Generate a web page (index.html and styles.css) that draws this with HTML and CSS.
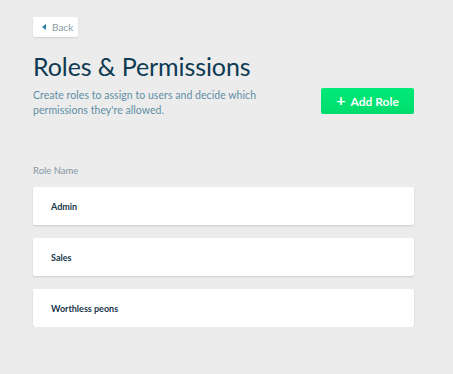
FILE: index.html
```html
<!DOCTYPE html>
<html lang="en">
<head>
  <meta charset="UTF-8"/>
  <meta name="viewport" content="width=device-width, initial-scale=1.0"/>
  <title>Roles &amp; Permissions</title>
  <link rel="stylesheet" href="styles.css">
</head>
<body>
  <div class="page">
    <button class="back-btn">
      <svg class="caret" width="4" height="6" viewBox="0 0 4 6"><path d="M4 0 L0 3 L4 6 Z" fill="#2f7ea3"/></svg>
      Back
    </button>

    <div class="header">
      <div class="intro">
        <h1>Roles &amp; Permissions</h1>
        <p>Create roles to assign to users and decide which permissions they're allowed.</p>
      </div>
      <button class="add-btn"><span class="plus">+</span> Add Role</button>
    </div>

    <div class="label">Role Name</div>
    <div class="roles">
      <div class="role-card">Admin</div>
      <div class="role-card">Sales</div>
      <div class="role-card">Worthless peons</div>
    </div>
  </div>
</body>
</html>
```

FILE: styles.css
```css
:root {
  --bg-color: #ececec;
  --card-bg: #ffffff;
  --title-color: #0e3a52;
  --sub-color: #5f8ea6;
  --label-color: #8497a3;
  --role-color: #17364a;
  --card-shadow: 0 1px 2px rgba(0,0,0,0.12);
}

*, *::before, *::after { box-sizing: border-box; }

body {
  margin: 0;
  font-family: Lato, "Open Sans", sans-serif;
  background: var(--bg-color);
}

.page {
  width: 381px;
  margin-left: 33px;
  padding-top: 17px;
}

.back-btn {
  display: flex;
  align-items: center;
  gap: 6px;
  width: 45px;
  height: 20px;
  padding: 0 0 0 9px;
  border: none;
  border-radius: 2px;
  background: var(--card-bg);
  box-shadow: var(--card-shadow);
  font: 400 10px Lato, sans-serif;
  color: #8a9aa6;
}

.header {
  display: flex;
  justify-content: space-between;
  align-items: flex-start;
  margin-top: 12px;
}

h1 {
  margin: 0;
  font-weight: 400;
  font-size: 25px;
  line-height: 34px;
  letter-spacing: -0.1px;
  color: var(--title-color);
}

.intro p {
  margin: 5px 0 0;
  width: 228px;
  font-size: 10.5px;
  line-height: 15px;
  letter-spacing: 0.05px;
  color: var(--sub-color);
}

.add-btn {
  margin-top: 39px;
  width: 93px;
  height: 26px;
  border: none;
  border-radius: 2px;
  background: linear-gradient(180deg, #00ea78 0%, #00dc6c 100%);
  color: #fff;
  font: 700 12px Lato, sans-serif;
  display: flex;
  align-items: center;
  justify-content: center;
  gap: 5px;
}

.plus {
  font-size: 16px;
  font-weight: 700;
  line-height: 1;
  margin-top: -2px;
}

.label {
  margin-top: 47px;
  font-size: 9.5px;
  color: var(--label-color);
}

.roles {
  display: flex;
  flex-direction: column;
  gap: 13px;
  margin-top: 11px;
}

.role-card {
  height: 38px;
  padding-left: 18px;
  display: flex;
  align-items: center;
  background: var(--card-bg);
  border-radius: 2px;
  box-shadow: 0 1px 2px rgba(0,0,0,0.14);
  font-size: 9px;
  font-weight: 700;
  color: var(--role-color);
}
```
